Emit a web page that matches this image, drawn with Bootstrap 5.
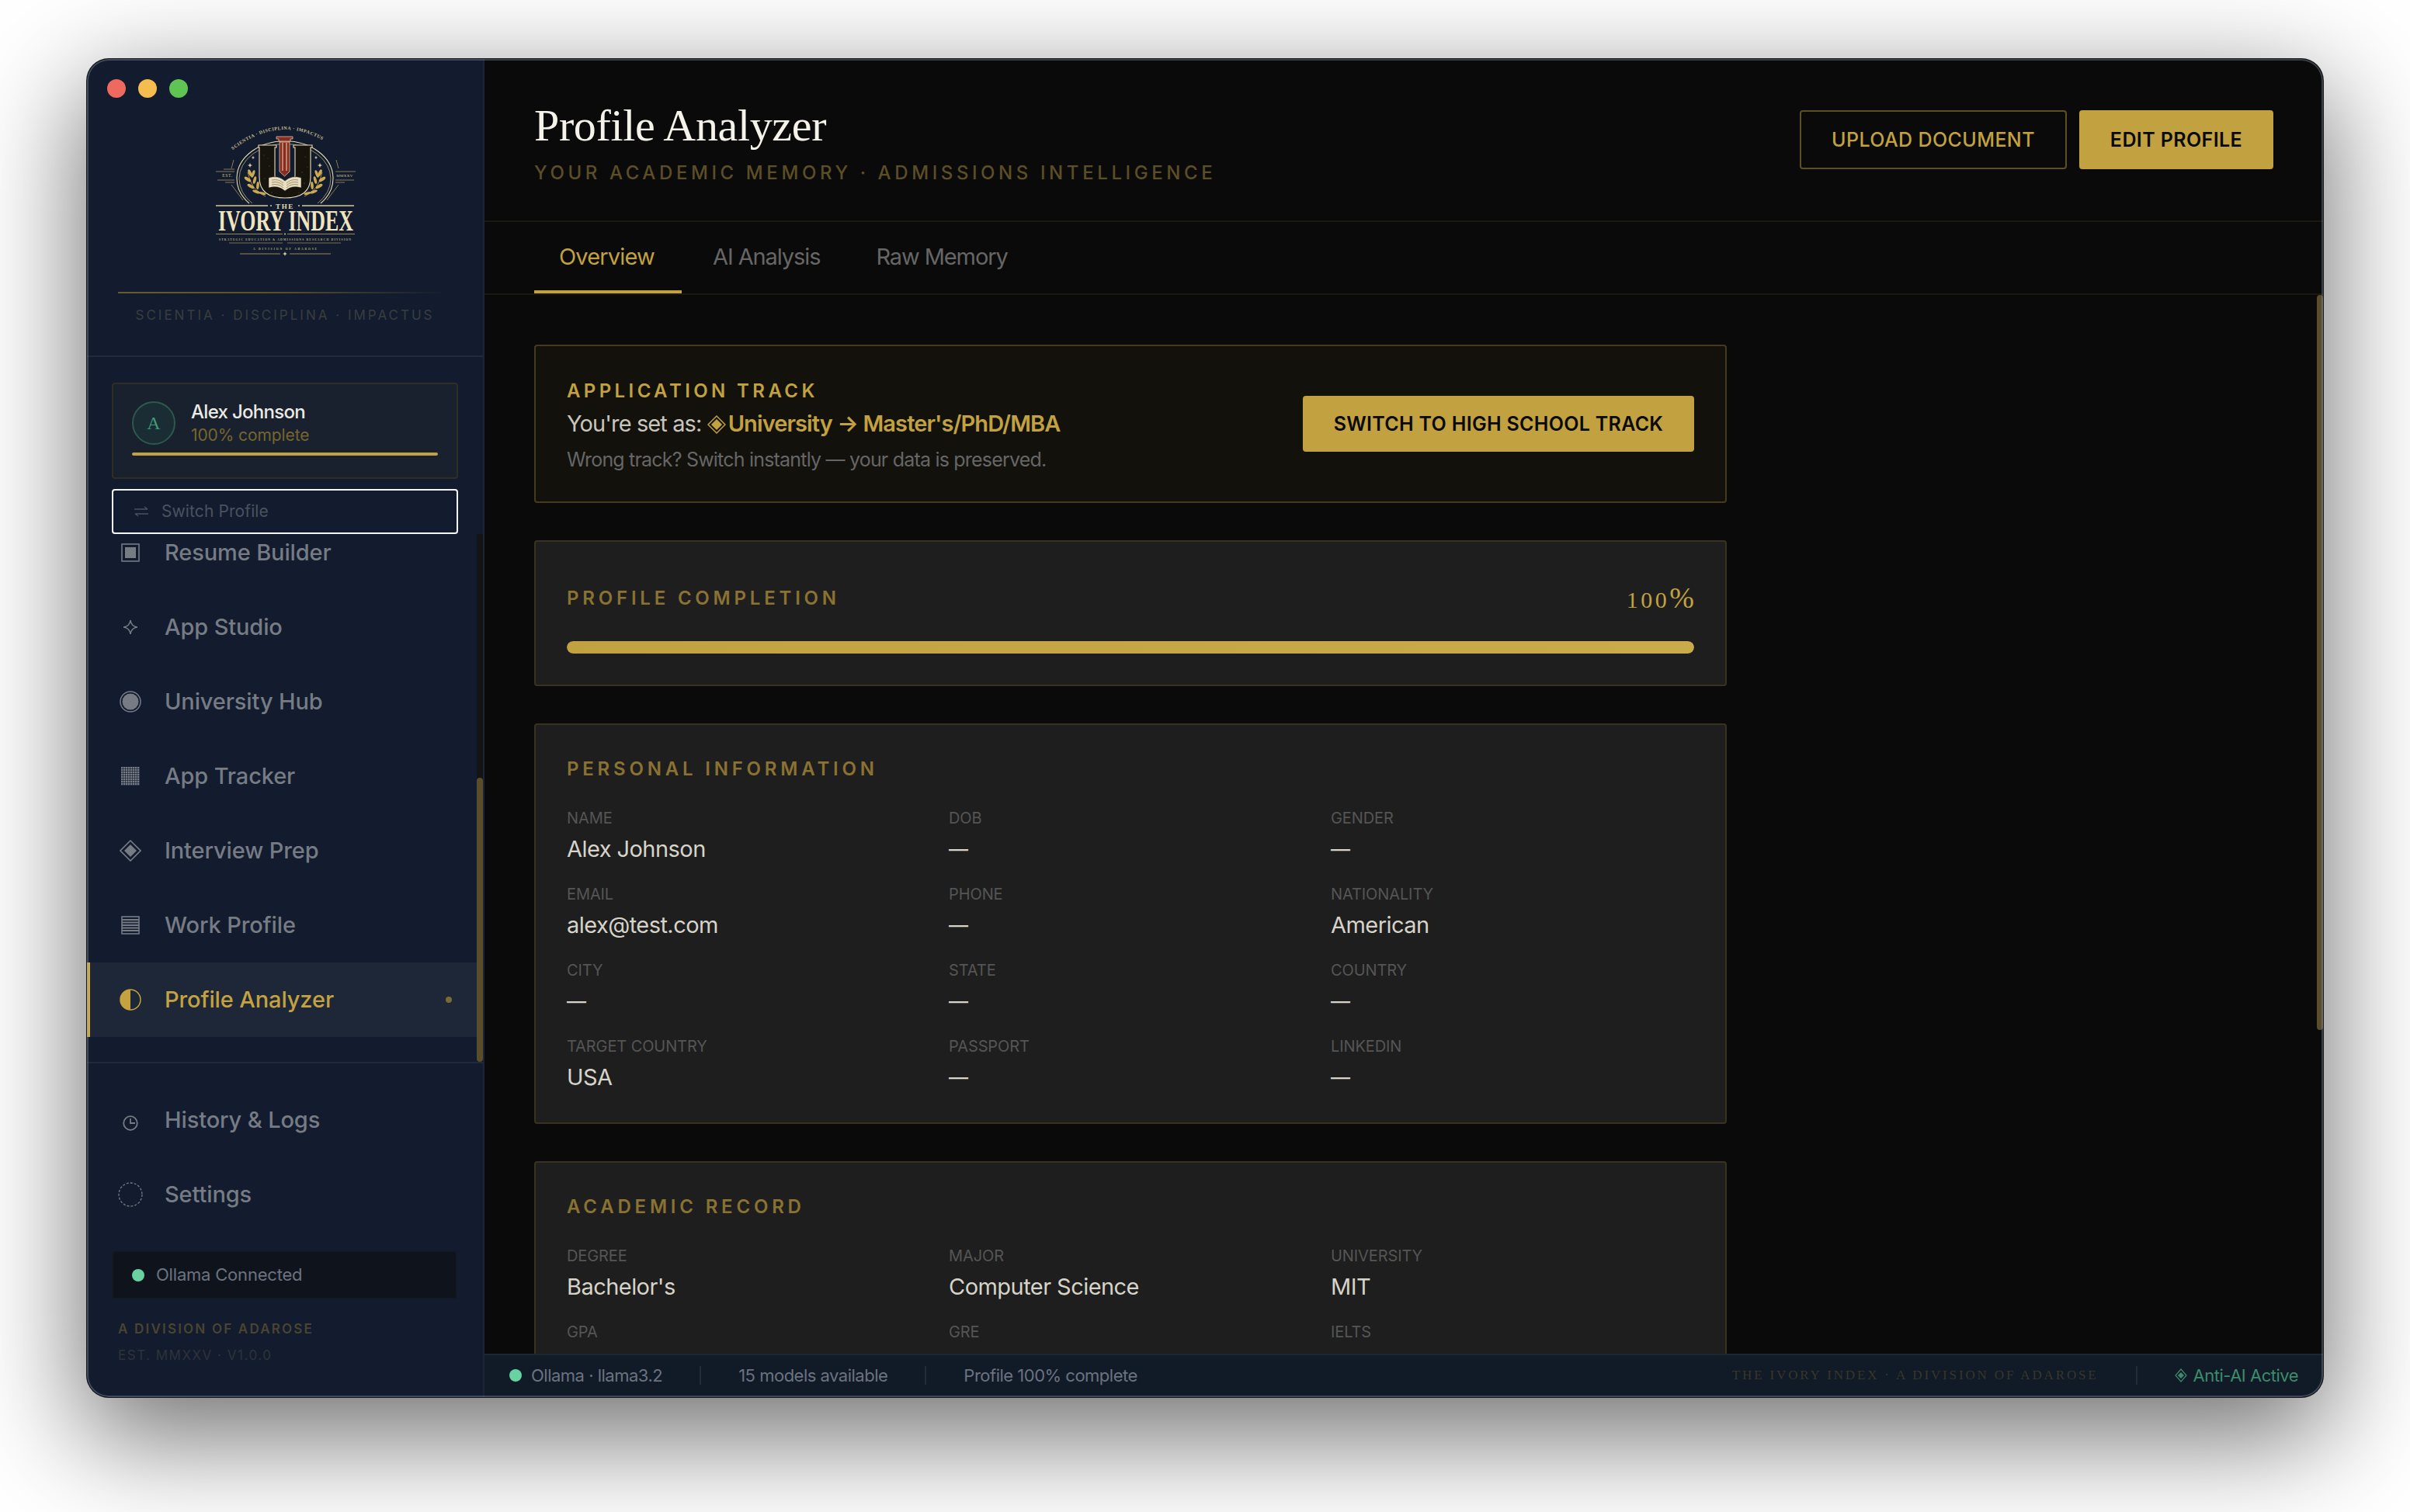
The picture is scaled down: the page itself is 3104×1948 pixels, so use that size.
<!doctype html>
<html lang="en">
<head>
<meta charset="utf-8">
<title>Profile Analyzer</title>
<link href="https://cdn.jsdelivr.net/npm/bootstrap@5.3.0/dist/css/bootstrap.min.css" rel="stylesheet">
<style>
:root{--gold:#c2a140;--gold-dim:#8a7232;--gold-mute:#5c4e26;--navy:#121c2e;--ink:#0a0a0a;--panel:#1e1e1e;--line:#443a20;}
html,body{height:100%;}
a{text-decoration:none;}
body.stage{margin:0;background:#fff;padding:76px 112px;font-family:Inter,"Liberation Sans",sans-serif;}
.app-window{width:2880px;height:1724px;border-radius:28px;overflow:hidden;position:relative;background:var(--ink);box-shadow:0 0 0 1px #15171c,0 44px 140px 8px rgba(0,0,0,.56);}
.app-window::after{content:"";position:absolute;inset:0;border-radius:28px;box-shadow:inset 0 0 0 2px rgba(150,160,180,.35);pointer-events:none;}
.side-col{width:512px;flex:none;background:var(--navy);border-right:2px solid #1c2535;}
.brand-zone{height:384px;flex:none;border-bottom:2px solid #222a38;padding-top:26px;}
.traffic{padding-left:26px;gap:16px;}
.traffic i{display:block;width:24px;height:24px;border-radius:50%;}
.t-red{background:#ee6a5f;}.t-yel{background:#f5bd4f;}.t-grn{background:#5fc454;}
.logo-art{display:block;width:195px;height:180px;margin:29px auto 0;}
.brand-rule{height:2px;margin:41px 46px 0 40px;background:linear-gradient(90deg,#6b5a2c,#5c4e26 50%,rgba(92,78,38,0));}
.motto{text-align:center;font-size:17px;letter-spacing:3px;color:#3a3d3e;line-height:24px;margin-top:16px;white-space:nowrap;}
.who-zone{padding:33px 32px 0;flex:none;}
.who-card{height:124px;background:#1a212e;border:2px solid #302d25;border-radius:4px;padding:20px 24px 0;}
.who-row{gap:20px;}
.who-avatar{width:56px;height:56px;border-radius:50%;border:2px solid #2a5a4c;background:#1a2d34;color:#3f9a78;font-family:"Liberation Serif",serif;font-size:24px;flex:none;}
.who-name{font-size:24px;line-height:32px;font-weight:500;color:#eceae4;letter-spacing:-.7px;}
.who-pct{font-size:21px;line-height:28px;color:#75662f;letter-spacing:-.1px;}
.who-bar{height:4px;margin-top:8px;background:var(--gold);border-radius:2px;}
.switch-box{height:58px;margin-top:13px;border:2px solid #f4f6f8;border-radius:4px;padding-left:26px;color:#4a5260;font-size:21px;gap:16px;letter-spacing:.1px;}
.nav-zone{flex:1;min-height:0;overflow:hidden;border-bottom:2px solid #222a38;}
.nav-list{flex:1;min-width:0;overflow:hidden;}
.nav-list .side-link:first-child{margin-top:-24px;}
.side-link{height:96px;flex:none;display:flex;align-items:center;color:#767b84;font-size:29px;font-weight:500;letter-spacing:-.12px;padding:0;}
.side-link .ico{width:100px;padding-left:12px;flex:none;display:flex;justify-content:center;}
.side-link.on{background:#1e2738;color:#c4a23f;box-shadow:inset 4px 0 0 #c9ab4c;}
.on-dot{width:8px;height:8px;border-radius:50%;background:#7a6a35;margin-left:auto;margin-right:32px;}
.track-v{width:8px;flex:none;background:#141414;}
.thumb-v{background:#5a4d2c;border-radius:4px;}
.thumb-side{height:366px;}
.track-main{width:8px;flex:none;}
.thumb-main{height:947px;}
.foot-zone{padding:25px 0 42px;flex:none;}
.conn-box{height:63px;margin:24px 33px 0 32px;background:#0f141c;border:2px solid #141a25;border-radius:4px;padding-left:24px;gap:15px;color:#6b7280;font-size:22px;letter-spacing:-.2px;}
.ok-dot{width:16px;height:16px;border-radius:50%;background:#68d3a1;flex:none;}
.foot-a{margin:26px 0 0 40px;font-size:17px;line-height:24px;font-weight:600;letter-spacing:2.2px;color:#4a4430;}
.foot-b{margin:10px 0 0 40px;font-size:17px;line-height:24px;letter-spacing:1.5px;color:#2f3238;}
.main-col{flex:1;min-width:0;}
.head-zone{height:210px;flex:none;padding:0 64px;border-bottom:2px solid #1b1810;}
.head-text{padding-top:7px;}
.page-title{font-family:"Liberation Serif",serif;font-weight:400;font-size:58px;line-height:68px;color:#f5f2ea;margin:0;letter-spacing:-.35px;}
.page-sub{font-size:24px;line-height:34px;font-weight:500;letter-spacing:4.6px;color:var(--gold-mute);margin-top:10px;white-space:nowrap;}
.act-btn{height:76px;border-radius:4px;font-size:25px;font-weight:500;letter-spacing:.4px;padding:2px 0 0;display:flex;align-items:center;justify-content:center;}
.act-ghost{width:344px;border:2px solid var(--gold-mute);color:var(--gold);background:transparent;}
.act-fill{width:250px;border:0;background:var(--gold);color:#0a0a0a;font-weight:600;margin-left:16px;}
.tab-zone{height:94px;flex:none;padding:0 64px;border-bottom:2px solid #1b1810;gap:8px;}
.tab-link{height:92px;padding:2px 32px 0;color:#666;font-size:29px;letter-spacing:-1.1px;display:flex;align-items:center;border-bottom:4px solid transparent;}
.tab-link.on{color:var(--gold);border-bottom-color:var(--gold);min-width:190px;letter-spacing:-.85px;}
.body-zone{flex:1;min-height:0;overflow:hidden;}
.body-flow{flex:1;min-width:0;padding:64px 0 0 64px;}
.box{width:1536px;border:2px solid #3a3220;border-radius:4px;background:var(--panel);margin-bottom:48px;flex:none;}
.box-track{background:#12110c;border-color:#453a1f;padding:41px 40px 36px;}
.cap-gold{font-size:24px;line-height:34px;font-weight:600;letter-spacing:4.4px;color:var(--gold);margin-bottom:3px;}
.set-line{font-size:29px;line-height:44px;color:#c8c5bc;letter-spacing:-.9px;}
.set-line b{color:var(--gold);font-weight:600;}
.set-line svg{vertical-align:-3px;margin:0 3px 0 0;}
.set-hint{font-size:25px;line-height:36px;margin-top:6px;color:#666;letter-spacing:-.8px;}
.switch-btn{width:504px;height:72px;border-radius:4px;border:0;background:var(--gold);color:#0a0a0a;font-size:25px;font-weight:600;letter-spacing:.3px;padding:2px 0 0;flex:none;margin-top:-5px;}
.box-plain{padding:40px 40px 38px;}
.box-meter{padding-bottom:40px;}
.head-row{height:66px;margin-bottom:22px;}
.cap-dim{font-size:24px;line-height:34px;font-weight:600;letter-spacing:4.8px;color:var(--gold-dim);}
.pct-num{font-family:"Liberation Serif",serif;color:var(--gold);font-size:30px;line-height:40px;letter-spacing:3.5px;}
.pct-num span{font-size:38px;letter-spacing:0;}
.bar-wrap{height:16px;background:#2a2a2a;border-radius:8px;}
.bar-wrap .progress-bar{width:100%;border-radius:8px;background:linear-gradient(90deg,#c2a140,#c9ab4c);}
.field-grid{--bs-gutter-x:24px;--bs-gutter-y:23px;margin-top:8px;}
.fld-lab{font-size:20px;line-height:30px;color:#555;letter-spacing:-.1px;text-transform:uppercase;}
.fld-val{font-size:29px;line-height:40px;margin-top:5px;color:#d6d3c9;letter-spacing:-.55px;}
.fld-none{font-size:25px;font-weight:500;}
.status-zone{height:56px;flex:none;background:#111a27;border-top:2px solid #1d2533;padding:0 32px 2px 32px;color:#6b7280;font-size:22px;letter-spacing:-.5px;}
.st-gap{gap:12px;}
.st-sep{width:2px;height:24px;background:#242c3a;margin:0 48px;flex:none;}
.st-brand{font-family:"Liberation Serif",serif;font-size:17px;letter-spacing:2.85px;color:#3a3628;white-space:nowrap;}
.st-ai{color:#3e8a6c;gap:8px;}
</style>
</head>
<body class="stage">
<div class="app-window d-flex">

  <aside class="side-col d-flex flex-column">
    <div class="brand-zone">
      <div class="traffic d-flex"><i class="t-red"></i><i class="t-yel"></i><i class="t-grn"></i></div>
      <svg class="logo-art" viewBox="50 25 195 180" xmlns="http://www.w3.org/2000/svg" role="img" aria-label="The Ivory Index">
        <defs>
          <path id="mottoArc" d="M79 64 Q147 10 215 64"/>
          <g id="leafs" fill="#cda94f">
            <path d="M122 123 Q104 116 99 92" fill="none" stroke="#cda94f" stroke-width=".8"/>
            <ellipse cx="102" cy="93" rx="2" ry="5" transform="rotate(-25 102 93)"/>
            <ellipse cx="106" cy="94" rx="1.8" ry="5" transform="rotate(20 106 94)"/>
            <ellipse cx="99" cy="101" rx="2" ry="5" transform="rotate(-55 99 101)"/>
            <ellipse cx="108" cy="102" rx="1.8" ry="5" transform="rotate(15 108 102)"/>
            <ellipse cx="103" cy="110" rx="2" ry="5" transform="rotate(-60 103 110)"/>
            <ellipse cx="112" cy="109" rx="1.8" ry="5" transform="rotate(5 112 109)"/>
            <ellipse cx="110" cy="117" rx="1.8" ry="5" transform="rotate(-70 110 117)"/>
            <ellipse cx="118" cy="119" rx="1.6" ry="4.5" transform="rotate(-75 118 119)"/>
          </g>
          <path id="spark" d="M0-4 L1-1 L4 0 L1 1 L0 4 L-1 1 L-4 0 L-1-1Z" fill="#e8dcb0"/>
        </defs>
        <text font-family="Liberation Serif, serif" font-size="6" font-weight="700" fill="#cfc08e" letter-spacing=".6"><textPath href="#mottoArc" startOffset="1">SCIENTIA · DISCIPLINA · IMPACTUS</textPath></text>
        <path d="M101 132 A62 48 0 1 1 193 132" fill="none" stroke="#e8dcb0" stroke-width="1.1"/>
        <path d="M105 132 A59 45 0 1 1 189 132" fill="none" stroke="#cfc08e" stroke-width=".7"/>
        <path d="M113 57 H136 V60 H134 V96 Q134 104 147 104 Q160 104 160 96 V60 H158 V57 H182 V60 H180 V98 Q180 125 147 125 Q114 125 114 98 V60 H113Z" fill="#17140e" stroke="#ece0b8" stroke-width="1.1"/>
        <g fill="#7a6228"><circle cx="120" cy="70" r=".5"/><circle cx="127" cy="84" r=".6"/><circle cx="173" cy="72" r=".5"/><circle cx="169" cy="92" r=".6"/><circle cx="121" cy="100" r=".5"/><circle cx="176" cy="85" r=".5"/><circle cx="130" cy="118" r=".6"/><circle cx="165" cy="118" r=".5"/><circle cx="125" cy="74" r=".4"/><circle cx="172" cy="106" r=".6"/></g>
        <path d="M136 46 H157 V49 H154 V52 H139 V49 H136Z" fill="#8b2a1f" stroke="#ece0b8" stroke-width=".7"/>
        <path d="M140 53 H153 V91 L146.5 97 L140 91Z" fill="#8b2a1f" stroke="#ece0b8" stroke-width=".7"/>
        <path d="M144 54 V90 M149 54 V90" stroke="#ece0b8" stroke-width="1"/>
        <path d="M126 99 Q138 95 147 103 Q156 95 168 99 V112 Q156 108 147 116 Q138 108 126 112Z" fill="#e9dfc0" stroke="#1a160e" stroke-width=".5"/>
        <path d="M130 102 Q139 100 145 106 M130 105 Q139 103 145 109 M130 108 Q139 106 145 112 M164 102 Q155 100 149 106 M164 105 Q155 103 149 109 M164 108 Q155 106 149 112" fill="none" stroke="#6a5c38" stroke-width=".6"/>
        <use href="#leafs"/><use href="#leafs" transform="matrix(-1 0 0 1 294 0)"/>
        <use href="#spark" transform="translate(106 73) scale(.6)"/><use href="#spark" transform="translate(102 83) scale(.8)"/>
        <use href="#spark" transform="translate(187 73) scale(.6)"/><use href="#spark" transform="translate(192 83) scale(.8)"/>
        <g stroke="#a8945a" stroke-width=".8" fill="none">
          <path d="M68 88 H82 M58 91 H82 M60 102 H82 M70 105 H82 M81 76 L78 87 M78 108 L93 128"/>
          <path d="M212 91 H238 M212 102 H236 M212 105 H224 M213 76 L216 87 M216 108 L201 128"/>
        </g>
        <text x="73" y="98" text-anchor="middle" font-family="Liberation Serif, serif" font-size="5.6" fill="#cfc08e" letter-spacing=".6">EST.</text>
        <text x="224" y="98" text-anchor="middle" font-family="Liberation Serif, serif" font-size="5" fill="#cfc08e" letter-spacing=".4">MMXXV</text>
        <path d="M58 135 H125 M169 135 H236" stroke="#d8c99a" stroke-width="1.6"/>
        <circle cx="129" cy="135" r="1" fill="#d8c99a"/><circle cx="165" cy="135" r="1" fill="#d8c99a"/>
        <text x="147" y="138.5" text-anchor="middle" font-family="Liberation Serif, serif" font-size="9" font-weight="700" fill="#e8dcb0" letter-spacing="1.6">THE</text>
        <text x="61" y="167" textLength="174" lengthAdjust="spacingAndGlyphs" font-family="Liberation Serif, serif" font-size="37" font-weight="700" fill="#f0e4c0">IVORY INDEX</text>
        <path d="M58 171.500 H144 M150 171.500 H237" stroke="#a8945a" stroke-width=".9"/><circle cx="147" cy="171.500" r="1" fill="#d8c99a"/>
        <text x="62" y="180" textLength="170" font-family="Liberation Serif, serif" font-size="3.7" font-weight="700" fill="#b8a878">STRATEGIC EDUCATION &amp; ADMISSIONS RESEARCH DIVISION</text>
        <path d="M75 183 H144 M150 183 H219" stroke="#a8945a" stroke-width=".7"/>
        <text x="106" y="192" textLength="82" font-family="Liberation Serif, serif" font-size="3.7" font-weight="700" fill="#b8a878">A DIVISION OF ADAROSE</text>
        <path d="M89 197 H141 M153 197 H206" stroke="#a8945a" stroke-width=".9"/>
        <use href="#spark" transform="translate(147 197) scale(.75)"/>
      </svg>
      <div class="brand-rule"></div>
      <div class="motto">SCIENTIA · DISCIPLINA · IMPACTUS</div>
    </div>

    <div class="who-zone">
      <div class="who-card">
        <div class="d-flex align-items-center who-row">
          <div class="who-avatar d-flex align-items-center justify-content-center">A</div>
          <div>
            <div class="who-name">Alex Johnson</div>
            <div class="who-pct">100% complete</div>
          </div>
        </div>
        <div class="who-bar"></div>
      </div>
      <div class="switch-box d-flex align-items-center">
        <svg width="20" height="14" viewBox="0 0 20 14" fill="none" stroke="currentColor" stroke-width="1.4"><path d="M1 4 H18 M14 1 L18 4 M19 10 H2 M6 13 L2 10"/></svg>
        <span>Switch Profile</span>
      </div>
    </div>

    <div class="nav-zone d-flex">
      <nav class="nav-list d-flex flex-column">
        <a class="side-link" href="#"><span class="ico"><svg width="24" height="24" viewBox="0 0 24 24"><rect x="1" y="1" width="22" height="22" fill="none" stroke="currentColor" stroke-width="1.6"/><rect x="5" y="5" width="14" height="14" fill="currentColor"/></svg></span>Resume Builder</a>
        <a class="side-link" href="#"><span class="ico"><svg width="20" height="20" viewBox="0 0 20 20"><path d="M10 1 Q11 9 19 10 Q11 11 10 19 Q9 11 1 10 Q9 9 10 1Z" fill="none" stroke="currentColor" stroke-width="1.5"/></svg></span>App Studio</a>
        <a class="side-link" href="#"><span class="ico"><svg width="28" height="28" viewBox="0 0 28 28"><circle cx="14" cy="14" r="13" fill="none" stroke="currentColor" stroke-width="1.5"/><circle cx="14" cy="14" r="10.500" fill="currentColor"/></svg></span>University Hub</a>
        <a class="side-link" href="#"><span class="ico"><svg width="24" height="24" viewBox="0 0 24 24"><defs><pattern id="gridDots" width="3" height="3" patternUnits="userSpaceOnUse"><rect width="3" height="3" fill="#767b84"/><rect x="2" y="0" width="1" height="3" fill="#121c2e" opacity=".6"/><rect x="0" y="2" width="3" height="1" fill="#121c2e" opacity=".6"/></pattern></defs><rect width="24" height="24" fill="url(#gridDots)"/></svg></span>App Tracker</a>
        <a class="side-link" href="#"><span class="ico"><svg width="28" height="28" viewBox="0 0 28 28"><path d="M14 1 L27 14 L14 27 L1 14Z" fill="none" stroke="currentColor" stroke-width="1.6"/><path d="M14 6 L22 14 L14 22 L6 14Z" fill="currentColor"/></svg></span>Interview Prep</a>
        <a class="side-link" href="#"><span class="ico"><svg width="24" height="24" viewBox="0 0 24 24"><rect x="1" y="1" width="22" height="22" fill="none" stroke="currentColor" stroke-width="1.6"/><path d="M1 5 H23 M1 8.500 H23 M1 12 H23 M1 15.500 H23 M1 19 H23" stroke="currentColor" stroke-width="2"/></svg></span>Work Profile</a>
        <a class="side-link on" href="#"><span class="ico"><svg width="28" height="28" viewBox="0 0 28 28"><circle cx="14" cy="14" r="13" fill="none" stroke="currentColor" stroke-width="1.5"/><path d="M14 1 A13 13 0 0 0 14 27Z" fill="currentColor"/></svg></span>Profile Analyzer<span class="on-dot"></span></a>
      </nav>
      <div class="track-v d-flex flex-column justify-content-end"><div class="thumb-v thumb-side"></div></div>
    </div>

    <div class="foot-zone">
      <a class="side-link" href="#"><span class="ico"><svg class="mt-2" width="20" height="20" viewBox="0 0 20 20" fill="none" stroke="currentColor" stroke-width="1.8"><circle cx="10" cy="10" r="8.800"/><path d="M10 4 V10 H16"/></svg></span>History &amp; Logs</a>
      <a class="side-link" href="#"><span class="ico"><svg width="32" height="32" viewBox="0 0 32 32" fill="none" stroke="currentColor" stroke-width="1.3" stroke-dasharray="3 2"><circle cx="16" cy="16" r="15"/></svg></span>Settings</a>
      <div class="conn-box d-flex align-items-center"><span class="ok-dot"></span><span>Ollama Connected</span></div>
      <div class="foot-a">A DIVISION OF ADAROSE</div>
      <div class="foot-b">EST. MMXXV · V1.0.0</div>
    </div>
  </aside>

  <main class="main-col d-flex flex-column">
    <header class="head-zone d-flex align-items-center justify-content-between">
      <div class="head-text">
        <h1 class="page-title">Profile Analyzer</h1>
        <div class="page-sub">YOUR ACADEMIC MEMORY · ADMISSIONS INTELLIGENCE</div>
      </div>
      <div class="d-flex">
        <button class="btn act-btn act-ghost" type="button">UPLOAD DOCUMENT</button>
        <button class="btn act-btn act-fill" type="button">EDIT PROFILE</button>
      </div>
    </header>

    <div class="tab-zone d-flex">
      <a class="tab-link on" href="#">Overview</a>
      <a class="tab-link" href="#">AI Analysis</a>
      <a class="tab-link" href="#">Raw Memory</a>
    </div>

    <div class="body-zone d-flex">
      <div class="body-flow d-flex flex-column">
        <section class="box box-track d-flex align-items-center justify-content-between">
          <div>
            <div class="cap-gold">APPLICATION TRACK</div>
            <div class="set-line">You're set as: <b><svg width="24" height="24" viewBox="0 0 24 24" fill="none" stroke="#c2a140" stroke-width="1.5"><path d="M12 1 L23 12 L12 23 L1 12Z"/><path d="M12 6 L18 12 L12 18 L6 12Z" fill="#c2a140"/></svg>University → Master's/PhD/MBA</b></div>
            <div class="set-hint">Wrong track? Switch instantly — your data is preserved.</div>
          </div>
          <button class="btn switch-btn" type="button">SWITCH TO HIGH SCHOOL TRACK</button>
        </section>

        <section class="box box-plain box-meter">
          <div class="head-row d-flex align-items-center justify-content-between">
            <div class="cap-dim">PROFILE COMPLETION</div>
            <div class="pct-num">100<span>%</span></div>
          </div>
          <div class="progress bar-wrap"><div class="progress-bar"></div></div>
        </section>

        <section class="box box-plain">
          <div class="cap-dim">PERSONAL INFORMATION</div>
          <div class="row field-grid">
            <div class="col-4"><div class="fld-lab">Name</div><div class="fld-val">Alex Johnson</div></div>
            <div class="col-4"><div class="fld-lab">DOB</div><div class="fld-val fld-none">—</div></div>
            <div class="col-4"><div class="fld-lab">Gender</div><div class="fld-val fld-none">—</div></div>
            <div class="col-4"><div class="fld-lab">Email</div><div class="fld-val">alex@test.com</div></div>
            <div class="col-4"><div class="fld-lab">Phone</div><div class="fld-val fld-none">—</div></div>
            <div class="col-4"><div class="fld-lab">Nationality</div><div class="fld-val">American</div></div>
            <div class="col-4"><div class="fld-lab">City</div><div class="fld-val fld-none">—</div></div>
            <div class="col-4"><div class="fld-lab">State</div><div class="fld-val fld-none">—</div></div>
            <div class="col-4"><div class="fld-lab">Country</div><div class="fld-val fld-none">—</div></div>
            <div class="col-4"><div class="fld-lab">Target Country</div><div class="fld-val">USA</div></div>
            <div class="col-4"><div class="fld-lab">Passport</div><div class="fld-val fld-none">—</div></div>
            <div class="col-4"><div class="fld-lab">LinkedIn</div><div class="fld-val fld-none">—</div></div>
          </div>
        </section>

        <section class="box box-plain">
          <div class="cap-dim">ACADEMIC RECORD</div>
          <div class="row field-grid">
            <div class="col-4"><div class="fld-lab">Degree</div><div class="fld-val">Bachelor's</div></div>
            <div class="col-4"><div class="fld-lab">Major</div><div class="fld-val">Computer Science</div></div>
            <div class="col-4"><div class="fld-lab">University</div><div class="fld-val">MIT</div></div>
            <div class="col-4"><div class="fld-lab">GPA</div><div class="fld-val">7.8/10</div></div>
            <div class="col-4"><div class="fld-lab">GRE</div><div class="fld-val fld-none">—</div></div>
            <div class="col-4"><div class="fld-lab">IELTS</div><div class="fld-val">7.5</div></div>
          </div>
        </section>
      </div>
      <div class="track-main"><div class="thumb-v thumb-main"></div></div>
    </div>

    <footer class="status-zone d-flex align-items-center">
      <div class="d-flex align-items-center st-gap"><span class="ok-dot"></span><span>Ollama · llama3.2</span></div>
      <span class="st-sep"></span>
      <span>15 models available</span>
      <span class="st-sep"></span>
      <span>Profile 100% complete</span>
      <span class="st-brand ms-auto">THE IVORY INDEX · A DIVISION OF ADAROSE</span>
      <span class="st-sep"></span>
      <div class="d-flex align-items-center st-ai"><svg width="16" height="18" viewBox="0 0 16 18"><path d="M8 1 L15 9 L8 17 L1 9Z" fill="none" stroke="currentColor" stroke-width="1.2"/><path d="M8 5 L12 9 L8 13 L4 9Z" fill="currentColor"/></svg><span>Anti-AI Active</span></div>
    </footer>
  </main>
</div>
<script src="https://cdn.jsdelivr.net/npm/bootstrap@5.3.0/dist/js/bootstrap.bundle.min.js"></script>
</body>
</html>
